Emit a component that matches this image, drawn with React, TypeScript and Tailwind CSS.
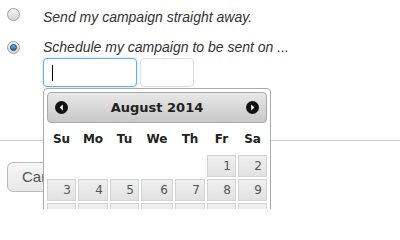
import React from 'react';

const dayNames = ['Su', 'Mo', 'Tu', 'We', 'Th', 'Fr', 'Sa'];

// August 2014 starts on a Friday
const weeks: (number | null)[][] = [
  [null, null, null, null, null, 1, 2],
  [3, 4, 5, 6, 7, 8, 9],
  [10, 11, 12, 13, 14, 15, 16],
  [17, 18, 19, 20, 21, 22, 23],
];

const Radio = ({ checked }: { checked?: boolean }) => (
  <span className="flex h-[13px] w-[13px] shrink-0 items-center justify-center rounded-full border border-[#a0a0a0] bg-gradient-to-b from-[#f4f4f4] to-[#d4d4d4]">
    {checked && (
      <span className="h-[7px] w-[7px] rounded-full border border-[#1c3d5a] bg-gradient-to-b from-[#6cb6e8] to-[#1a6bab]" />
    )}
  </span>
);

const NavIcon = ({ dir }: { dir: 'prev' | 'next' }) => (
  <svg width="13" height="13" viewBox="0 0 13 13">
    <circle cx="6.5" cy="6.5" r="6.5" fill="#111" />
    {dir === 'prev' ? (
      <polygon points="7.8,3.6 4.6,6.5 7.8,9.4" fill="#fff" />
    ) : (
      <polygon points="5.2,3.6 8.4,6.5 5.2,9.4" fill="#fff" />
    )}
  </svg>
);

const DatePicker = () => (
  <div className="absolute left-[43px] top-[88px] w-[228px] rounded-[4px] border border-[#aaaaaa] bg-white p-[3px] font-['DejaVu_Sans',sans-serif]">
    {/* Header */}
    <div className="flex h-[31px] items-center justify-between rounded-[4px] border border-[#aaaaaa] bg-gradient-to-b from-[#e8e8e8] to-[#c8c8c8] px-[7px]">
      <NavIcon dir="prev" />
      <span className="text-[13px] font-bold text-[#222222]">August 2014</span>
      <NavIcon dir="next" />
    </div>

    {/* Day names */}
    <div className="grid h-[32px] grid-cols-[29px_30px_29px_32px_30px_29px_29px] items-center gap-x-[2px]">
      {dayNames.map((d) => (
        <span key={d} className="text-center text-[12px] font-bold text-[#222222]">
          {d}
        </span>
      ))}
    </div>

    {/* Days */}
    <div className="grid grid-cols-[29px_30px_29px_32px_30px_29px_29px] gap-[2px]">
      {weeks.flat().map((n, i) =>
        n === null ? (
          <span key={i} className="h-[22px]" />
        ) : (
          <span
            key={i}
            className="flex h-[22px] items-center justify-end border border-[#d3d3d3] bg-gradient-to-b from-[#efefef] to-[#e2e2e2] pr-[4px] text-[12px] text-[#555555]"
          >
            {n}
          </span>
        )
      )}
    </div>
  </div>
);

const App = () => {
  return (
    <div className="relative h-[209px] w-[400px] overflow-hidden bg-white font-['Liberation_Sans',Arial,sans-serif]">
      <div className="pl-[7px] pt-[8px]">
        <div className="flex items-start">
          <Radio />
          <span className="ml-[23px] mt-[1px] text-[14px] leading-[16px] italic text-[#333333]">
            Send my campaign straight away.
          </span>
        </div>
        <div className="mt-[12px] flex items-start">
          <span className="mt-[4px]">
            <Radio checked />
          </span>
          <span className="ml-[23px] mt-[2px] text-[14px] leading-[16px] italic text-[#333333]">
            Schedule my campaign to be sent on ...
          </span>
        </div>
        <div className="ml-[36px] mt-[3px] flex gap-[3px]">
          <div className="flex h-[29px] w-[94px] items-center rounded-[4px] border border-[#66afe9] bg-white pl-[8px] shadow-[0_0_3px_rgba(102,175,233,0.5)]">
            <span className="h-[16px] w-px bg-black" />
          </div>
          <div className="h-[29px] w-[54px] rounded-[4px] border border-[#dddddd] bg-white" />
        </div>
      </div>

      <div className="mt-[53px] border-t border-[#cccccc]" />

      <div className="pl-[7px] pt-[21px]">
        <button className="h-[30px] w-[90px] rounded-[6px] border border-[#bbbbbb] bg-gradient-to-b from-[#f6f6f6] to-[#e8e8e8] pl-[14px] text-left text-[15px] text-[#4a5560]">
          Cancel
        </button>
      </div>

      <DatePicker />
    </div>
  );
};

export default App;
